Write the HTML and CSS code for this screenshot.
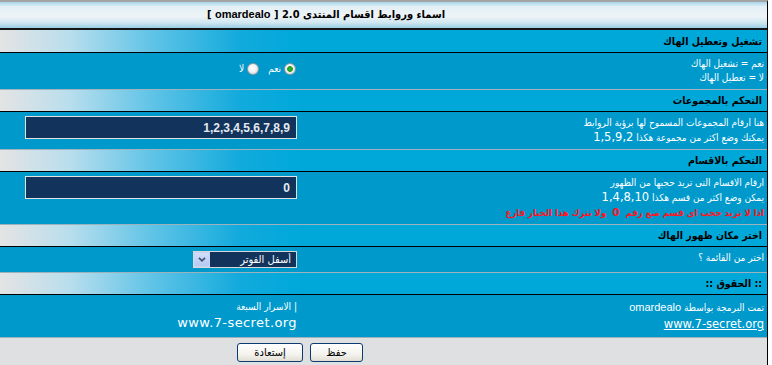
FILE: index.html
```html
<!DOCTYPE html>
<html lang="ar">
<head>
    <meta charset="UTF-8">
    <title>اسماء وروابط اقسام المنتدى</title>
    <link rel="stylesheet" href="styles.css">
</head>
<body>
    <form class="panel" dir="rtl" onsubmit="return false;">
        <div class="title">اسماء وروابط اقسام المنتدى 2.0 [ <span class="latin">omardealo</span> ]</div>

        <div class="head tall">تشغيل وتعطيل الهاك</div>
        <div class="row">
            <div class="label">نعم = تشغيل الهاك<br>لا = تعطيل الهاك</div>
            <div class="field choices">
                <label class="choice"><input type="radio" name="active" value="1" checked>نعم</label>
                <label class="choice"><input type="radio" name="active" value="0">لا</label>
            </div>
        </div>

        <div class="head">التحكم بالمجموعات</div>
        <div class="row">
            <div class="label">هنا ارقام المجموعات المسموح لها برؤية الروابط<br>يمكنك وضع اكثر من مجموعة هكذا <span class="num">1,5,9,2</span></div>
            <div class="field">
                <input class="text-box" type="text" value="1,2,3,4,5,6,7,8,9">
            </div>
        </div>

        <div class="head">التحكم بالاقسام</div>
        <div class="row">
            <div class="label">
                ارقام الاقسام التى تريد حجبها من الظهور<br>
                يمكن وضع اكثر من قسم هكذا <span class="num">1,4,8,10</span><br>
                <span class="warn">اذا لا تريد حجب اى قسم ضع رقم &nbsp;<b class="zero">0</b>&nbsp; ولا تترك هذا الخيار فارغ</span>
            </div>
            <div class="field">
                <input class="text-box" type="text" value="0">
            </div>
        </div>

        <div class="head">اختر مكان ظهور الهاك</div>
        <div class="row">
            <div class="label">اختر من القائمة ؟</div>
            <div class="field">
                <span class="select-wrap">
                    <select class="select-box">
                        <option>أسفل الفوتر</option>
                        <option>أعلى الهيدر</option>
                    </select>
                    <svg class="select-arrow" width="16" height="15" viewBox="0 0 16 15">
                        <path d="M4.5 5.5 L8 9 L11.5 5.5" fill="none" stroke="#3f5377" stroke-width="2"/>
                    </svg>
                </span>
            </div>
        </div>

        <div class="head">:: الحقوق ::</div>
        <div class="row credits">
            <div class="label">تمت البرمجة بواسطة <span class="latin">omardealo</span><br><a class="site" href="#">www.7-secret.org</a></div>
            <div class="field">| الاسرار السبعة<br><span class="site big">www.7-secret.org</span></div>
        </div>

        <div class="foot">
            <button type="submit" class="btn save">حفظ</button>
            <button type="reset" class="btn restore">إستعادة</button>
        </div>
    </form>
</body>
</html>
```

FILE: styles.css
```css
* {
    box-sizing: border-box;
}

body {
    margin: 0;
    background: #ffffff;
    font-family: Tahoma, "DejaVu Sans Condensed", "DejaVu Sans", sans-serif;
    font-size: 10px;
    color: #000;
}

.panel {
    width: 768px;
    margin: 0;
    border-top: 2px solid #a4a4a4;
    border-right: 1px solid #000;
}

.latin {
    font-family: "Liberation Sans", sans-serif;
}

.title {
    height: 28px;
    line-height: 25px;
    padding-right: 115px;
    text-align: center;
    font-weight: bold;
    font-size: 11px;
    background: linear-gradient(#a6d5ea 0, #e3f0f6 18%, #eef4f7 55%, #cfe6f0 80%, #98cde4 100%);
    border-bottom: 2px solid #151515;
}

.head {
    height: 22px;
    line-height: 21px;
    padding: 0 5px;
    font-weight: bold;
    font-size: 10.5px;
    background: linear-gradient(to right, #e4e4e4 0, #b8deed 70px, #62c4e7 150px, #12aadc 240px, #00a8da 300px);
    border-bottom: 1px solid #000;
}

.head.tall {
    height: 23px;
    line-height: 22px;
}

.row {
    display: grid;
    grid-template-columns: 1fr 300px;
    background: #0099cc;
    border-bottom: 1px solid #9db2bd;
    color: #ffffff;
}

.label {
    padding: 4px 3px;
    line-height: 14px;
}

.field {
    padding: 4px 3px;
    line-height: 14px;
}

.num {
    font-family: "DejaVu Sans", sans-serif;
    font-size: 11.5px;
    letter-spacing: 0.3px;
}

.warn {
    color: #ff1522;
    font-weight: bold;
    font-size: 9.5px;
}

.zero {
    font-family: "DejaVu Sans", sans-serif;
    font-size: 10.5px;
}

.choices {
    display: flex;
    align-items: center;
    align-self: start;
    gap: 8px;
    padding-top: 9px;
}

.choice {
    display: inline-flex;
    align-items: center;
    gap: 3px;
}

.choice input {
    appearance: none;
    width: 12px;
    height: 12px;
    margin: 0 1px 0 0;
    border: 1px solid #8c9aa6;
    border-radius: 50%;
    background: radial-gradient(circle at 45% 40%, #ffffff 0, #f2f2f2 45%, #c9cdd2 100%);
}

.choice input:checked {
    background: radial-gradient(circle, #2fbd2f 0, #1d9a1d 2.5px, transparent 3.2px),
                radial-gradient(circle at 45% 40%, #ffffff 0, #f2f2f2 45%, #c9cdd2 100%);
}

.text-box {
    display: block;
    width: 272px;
    height: 23px;
    margin: 0;
    padding: 0 6px;
    border: 1px solid #e2e2e2;
    background: #12345c;
    color: #e4e9ef;
    font-family: "Liberation Sans", sans-serif;
    font-weight: bold;
    font-size: 12px;
}

.select-wrap {
    position: relative;
    display: block;
    width: 104px;
    height: 17px;
}

.select-box {
    appearance: none;
    width: 104px;
    height: 17px;
    margin: 0;
    padding: 0 5px 0 20px;
    border: 1px solid #d8d8d8;
    border-radius: 0;
    background: #12345c;
    color: #ffffff;
    font-family: Tahoma, "DejaVu Sans Condensed", "DejaVu Sans", sans-serif;
    font-size: 11px;
}

.select-arrow {
    position: absolute;
    left: 1px;
    top: 1px;
    background: linear-gradient(#d2defa, #b6c9f2);
    border: 1px solid #c6d4f4;
    pointer-events: none;
}

.credits .label,
.credits .field {
    line-height: 16px;
}

.credits .latin {
    font-size: 11px;
}

.site {
    color: #ffffff;
    font-family: "DejaVu Sans", sans-serif;
    font-size: 11.5px;
}

a.site {
    text-decoration: underline;
}

.site.big {
    font-size: 13px;
    letter-spacing: 0.4px;
}

.foot {
    display: flex;
    gap: 7px;
    height: 30px;
    padding: 5px 404px 0 0;
    background: #dfe0e2;
    border-bottom: 1px solid #000;
}

.btn {
    height: 19px;
    padding: 0;
    border: 1px solid #0b3b70;
    border-radius: 3px;
    background: linear-gradient(#ffffff 0, #f4f3ee 60%, #e2ded4 100%);
    color: #000;
    font-family: Tahoma, "DejaVu Sans Condensed", "DejaVu Sans", sans-serif;
    font-size: 11px;
    cursor: pointer;
}

.save {
    width: 53px;
}

.restore {
    width: 66px;
}
```
